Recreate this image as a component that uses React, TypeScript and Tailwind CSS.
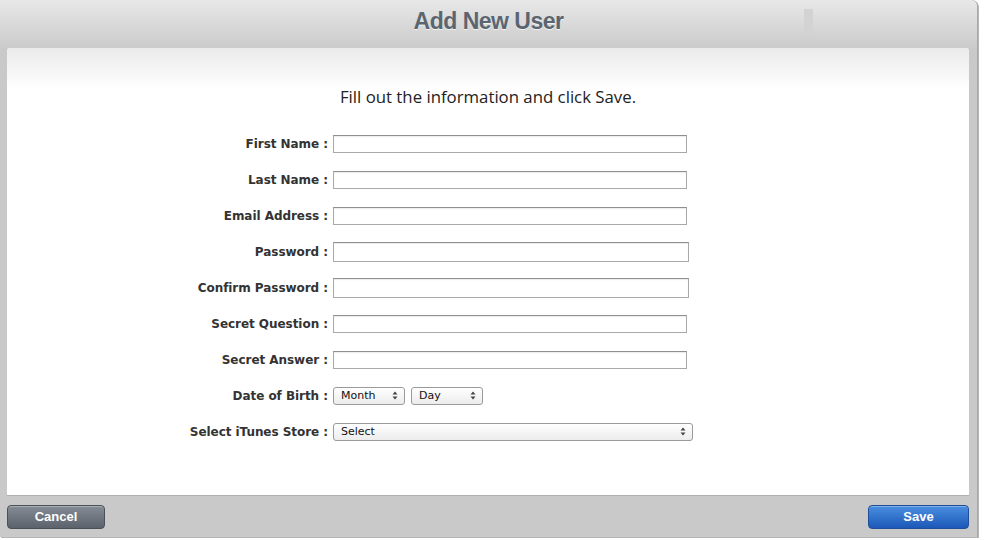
import React from 'react';

const fields = [
  { label: 'First Name :', w: 'w-[354px]', h: 'h-[18px]' },
  { label: 'Last Name :', w: 'w-[354px]', h: 'h-[18px]' },
  { label: 'Email Address :', w: 'w-[354px]', h: 'h-[18px]' },
  { label: 'Password :', w: 'w-[356px]', h: 'h-[20px]' },
  { label: 'Confirm Password :', w: 'w-[356px]', h: 'h-[20px]' },
  { label: 'Secret Question :', w: 'w-[354px]', h: 'h-[18px]' },
  { label: 'Secret Answer :', w: 'w-[354px]', h: 'h-[18px]' },
];

function Arrows() {
  return (
    <svg width="6" height="9" viewBox="0 0 6 9" className="shrink-0">
      <path d="M3 0.5 L5.5 3.5 H0.5 Z" fill="#444" />
      <path d="M3 8.5 L5.5 5.5 H0.5 Z" fill="#444" />
    </svg>
  );
}

function Select({ text, w }: { text: string; w: string }) {
  return (
    <div
      className={`${w} h-[18px] flex items-center justify-between pl-[7px] pr-[6px] rounded-[3px] border border-[#9a9a9a] bg-gradient-to-b from-white to-[#ececec] shadow-[0_1px_0_rgba(255,255,255,0.6)] text-[11px] text-[#111] font-['DejaVu_Sans',sans-serif]`}
    >
      <span className="pt-[2px]">{text}</span>
      <Arrows />
    </div>
  );
}

function Label({ children }: { children: React.ReactNode }) {
  return (
    <div className="text-right text-[12px] font-bold text-[#333] font-['DejaVu_Sans',sans-serif] tracking-[-0.05px] mt-[1px]">
      {children}
    </div>
  );
}

export default function App() {
  return (
    <div className="w-[995px] h-[540px] bg-white">
      <div className="w-[978px] h-[537px] bg-[#c9c9c9] flex flex-col rounded-tr-[6px] border-r border-[#a9a9a9] shadow-[1px_1px_0_#b5b5b5]">
        <div className="relative h-[48px] shrink-0 rounded-tr-[6px] bg-gradient-to-b from-[#e8e8e8] to-[#cbcbcb] flex justify-center pt-[8px]">
          <h1 className="h-[26px] leading-[26px] text-[23px] font-bold text-[#5b6570] font-['Liberation_Sans',Arial,sans-serif] tracking-[-0.5px] [text-shadow:0_1px_0_rgba(255,255,255,0.7)]">
            Add New User
          </h1>
          <div className="absolute left-[804px] top-[9px] w-[9px] h-[26px] bg-[#d3d3d3]" />
        </div>

        <div className="mx-[7px] mr-[8px] h-[448px] shrink-0 bg-[linear-gradient(to_bottom,#ebebeb_0px,#ffffff_42px)] rounded-t-[2px] border-b border-[#b0b0b0]">
          <p className="pt-[38px] leading-[22px] text-center text-[16.8px] text-[#222] font-['Open_Sans',sans-serif]">
            Fill out the information and click Save.
          </p>
          <div className="mt-[17px] grid grid-cols-[321px_auto] gap-x-[5px] auto-rows-[36px] items-center">
            {fields.map((f) => (
              <React.Fragment key={f.label}>
                <Label>{f.label}</Label>
                <div
                  className={`${f.w} ${f.h} mt-[1px] border border-[#a9a9a9] border-t-[#8f8f8f] bg-white shadow-[inset_0_1px_1px_rgba(0,0,0,0.08)]`}
                />
              </React.Fragment>
            ))}
            <Label>Date of Birth :</Label>
            <div className="flex gap-[6px] mt-[1px]">
              <Select text="Month" w="w-[72px]" />
              <Select text="Day" w="w-[72px]" />
            </div>
            <Label>Select iTunes Store :</Label>
            <div className="mt-[1px]">
              <Select text="Select" w="w-[360px]" />
            </div>
          </div>
        </div>

        <div className="flex-1 flex items-center justify-between pl-[7px] pr-[8px]">
          <button className="w-[98px] h-[24px] rounded-[4px] border border-[#4a5058] bg-gradient-to-b from-[#858c95] to-[#5b626b] text-white text-[13px] font-bold font-['Liberation_Sans',Arial,sans-serif] shadow-[inset_0_1px_0_rgba(255,255,255,0.3)]">
            Cancel
          </button>
          <button className="w-[101px] h-[24px] rounded-[4px] border border-[#1f4f9a] bg-gradient-to-b from-[#4a8fe0] to-[#1d58b8] text-white text-[13px] font-bold font-['Liberation_Sans',Arial,sans-serif] shadow-[inset_0_1px_0_rgba(255,255,255,0.3)]">
            Save
          </button>
        </div>
      </div>
    </div>
  );
}
